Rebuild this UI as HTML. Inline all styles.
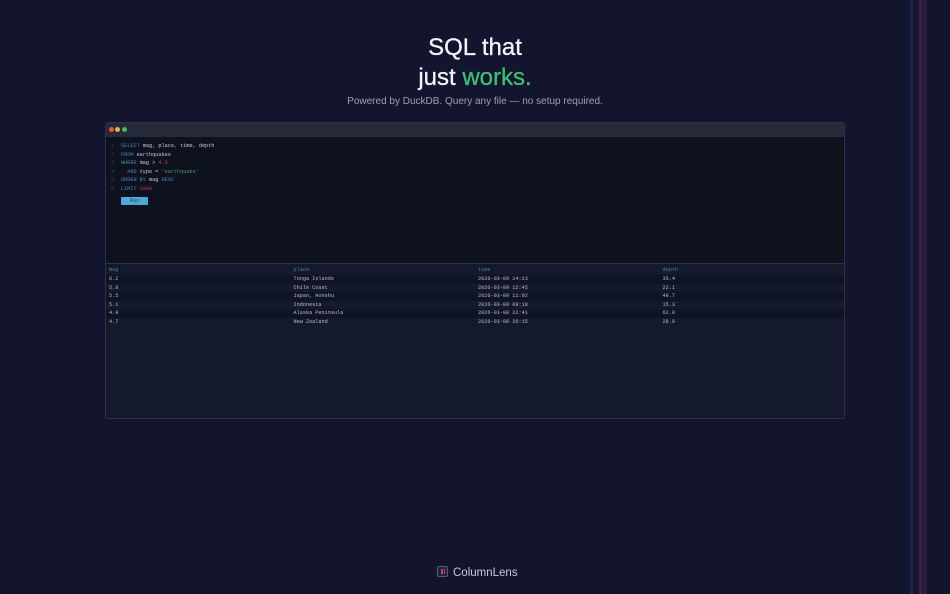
<!DOCTYPE html>
<html><head><style>
*{margin:0;padding:0;box-sizing:border-box}
body{width:950px;height:594px;overflow:hidden;background:#13152f;font-family:"Liberation Sans",sans-serif;position:relative}
.s{position:absolute;top:0;height:594px}
h1{position:absolute;top:33px;width:950px;text-align:center;color:#f2f4f8;font-size:24px;font-weight:500;line-height:30px;-webkit-text-stroke:0.3px #f2f4f8}
h1 span{color:#3fbf74;-webkit-text-stroke:0.3px #3fbf74}
.sub{position:absolute;top:96px;width:950px;text-align:center;color:#9aa0b4;font-size:10px}
.win{position:absolute;left:105px;top:122px;width:740px;height:297px;border:1px solid #2c3247;border-radius:3px;background:#141a2c;overflow:hidden}
.tb{height:14px;background:#252a3a;position:relative}
.d{position:absolute;top:4px;width:5px;height:5px;border-radius:50%}
.ed{height:127px;background:#0e121f;padding-top:5px;font-family:"Liberation Mono",monospace;font-size:5.2px;line-height:8.6px;color:#c8ccd8;position:relative;border-bottom:1px solid #2c3247}
.ln{position:absolute;left:5px;color:#3a4055}
.c{position:absolute;left:15px;white-space:pre}
.k{color:#4a88b0}.n{color:#c0394a}.st{color:#3f9a6a}
.run{position:absolute;left:15px;top:60px;width:27px;height:8px;background:#4fa9d4;border-radius:1px;color:#1d4a66;font-size:5px;line-height:8px;text-align:center;font-family:"Liberation Sans",sans-serif}
table{width:100%;border-collapse:collapse;font-family:"Liberation Mono",monospace;font-size:5.2px;color:#b8bccb}
td{height:8.5px;padding-left:3px;width:25%}
tr.h td{color:#4a7fa8;height:11px}
tr:nth-child(even) td{background:#0f1423}
tr:nth-child(odd) td{background:#141a2c}
.f{position:absolute;top:567px;left:453px;color:#c8ccd8;font-size:11.5px}
.lg{position:absolute;top:566px;left:437px;width:11px;height:11px;border:1px solid #555c78;border-radius:2px;background:#1c2140}
</style></head><body>
<div class="s" style="left:910px;width:3px;background:#1c2447"></div>
<div class="s" style="left:918px;width:9px;background:#2a1d42"></div>
<div class="s" style="left:920px;width:1px;background:#4a2248"></div>
<h1>SQL that<br>just <span>works.</span></h1>
<div class="sub">Powered by DuckDB. Query any file — no setup required.</div>
<div class="win">
<div class="tb"><div class="d" style="left:3px;background:#e5534b"></div><div class="d" style="left:9px;background:#e6b441"></div><div class="d" style="left:16px;background:#49b95a"></div></div>
<div class="ed">
<div class="ln" style="top:5px">1<br>2<br>3<br>4<br>5<br>6</div>
<div class="c" style="top:5px"><span class="k">SELECT</span> mag, place, time, depth
<span class="k">FROM</span> earthquakes
<span class="k">WHERE</span> mag &gt; <span class="n">4.5</span>
  <span class="k">AND</span> type = <span class="st">'earthquake'</span>
<span class="k">ORDER BY</span> mag <span class="k">DESC</span>
<span class="k">LIMIT</span> <span class="n">1000</span></div>
<div class="run">Run</div>
</div>
<table>
<tr class="h"><td>mag</td><td>place</td><td>time</td><td>depth</td></tr>
<tr><td>6.2</td><td>Tonga Islands</td><td>2026-03-09 14:23</td><td>35.4</td></tr>
<tr><td>5.8</td><td>Chile Coast</td><td>2026-03-09 12:45</td><td>22.1</td></tr>
<tr><td>5.5</td><td>Japan, Honshu</td><td>2026-03-09 11:02</td><td>48.7</td></tr>
<tr><td>5.1</td><td>Indonesia</td><td>2026-03-09 09:18</td><td>15.3</td></tr>
<tr><td>4.9</td><td>Alaska Peninsula</td><td>2026-03-08 22:41</td><td>62.0</td></tr>
<tr><td>4.7</td><td>New Zealand</td><td>2026-03-08 20:15</td><td>28.9</td></tr>
</table>
</div>
<div class="lg"><div style="position:absolute;left:3px;top:2px;width:1.5px;height:5px;background:#d04050"></div><div style="position:absolute;left:5.5px;top:2px;width:1.5px;height:5px;background:#d04050"></div></div>
<div class="f">ColumnLens</div>
</body></html>
